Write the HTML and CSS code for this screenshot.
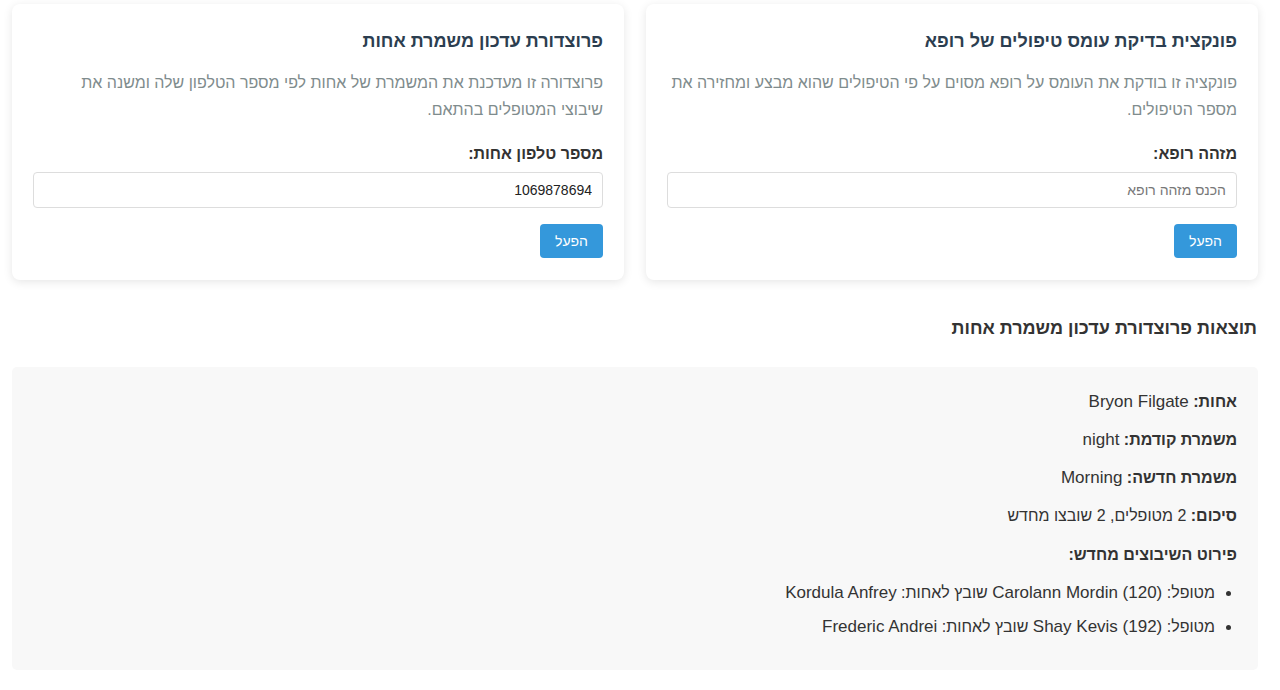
FILE: index.html
```html
<!DOCTYPE html>
<html lang="he" dir="rtl">
<head>
<meta charset="utf-8">
<title>פונקציות ופרוצדורות</title>
<link rel="stylesheet" href="styles.css">
</head>
<body>
<div class="page">
  <div class="cards">
    <section class="card">
      <h3 class="card-title">פונקצית בדיקת עומס טיפולים של רופא</h3>
      <p class="card-desc">פונקציה זו בודקת את העומס על רופא מסוים על פי הטיפולים שהוא מבצע ומחזירה את מספר הטיפולים.</p>
      <label class="field-label" for="doctorId">מזהה רופא:</label>
      <input class="field-input" id="doctorId" type="text" placeholder="הכנס מזהה רופא">
      <button class="btn">הפעל</button>
    </section>
    <section class="card">
      <h3 class="card-title">פרוצדורת עדכון משמרת אחות</h3>
      <p class="card-desc">פרוצדורה זו מעדכנת את המשמרת של אחות לפי מספר הטלפון שלה ומשנה את<br>שיבוצי המטופלים בהתאם.</p>
      <label class="field-label" for="nursePhone">מספר טלפון אחות:</label>
      <input class="field-input" id="nursePhone" type="text" value="1069878694">
      <button class="btn">הפעל</button>
    </section>
  </div>

  <h2 class="results-title">תוצאות פרוצדורת עדכון משמרת אחות</h2>
  <div class="results">
    <p class="row"><strong>אחות:</strong> <span class="en">Bryon Filgate</span></p>
    <p class="row"><strong>משמרת קודמת:</strong> <span class="en">night</span></p>
    <p class="row"><strong>משמרת חדשה:</strong> <span class="en">Morning</span></p>
    <p class="row"><strong>סיכום:</strong> 2 מטופלים, 2 שובצו מחדש</p>
    <p class="row"><strong>פירוט השיבוצים מחדש:</strong></p>
    <ul class="list">
      <li>מטופל: <span class="en">Carolann Mordin (120)</span> שובץ לאחות: <span class="en">Kordula Anfrey</span></li>
      <li>מטופל: <span class="en">Shay Kevis (192)</span> שובץ לאחות: <span class="en">Frederic Andrei</span></li>
    </ul>
  </div>
</div>
</body>
</html>
```
FILE: styles.css
```css
html, body {
  margin: 0;
  padding: 0;
  background: #ffffff;
}

body {
  direction: rtl;
  font-family: "Liberation Sans", Arial, sans-serif;
  color: #333333;
  line-height: 1.7;
  font-size: 16px;
}

.page {
  padding: 4px 22px 0 12px;
}

.cards {
  display: grid;
  grid-template-columns: 1fr 1fr;
  gap: 22px;
}

.card {
  background: #ffffff;
  border-radius: 8px;
  box-shadow: 0 2px 10px rgba(0, 0, 0, 0.1);
  padding: 22px 21px 22px;
}

.card-title {
  margin: 0 0 12px;
  font-size: 18px;
  font-weight: bold;
  color: #2c3e50;
}

.card-desc {
  margin: 0 0 17.5px;
  font-size: 16px;
  color: #7f8c8d;
}

.field-label {
  display: block;
  margin-bottom: 4.5px;
  font-size: 16px;
  font-weight: bold;
  color: #333333;
}

.field-input {
  display: block;
  width: 100%;
  box-sizing: border-box;
  height: 36px;
  padding: 8px 10px;
  border: 1px solid #dddddd;
  border-radius: 4px;
  font-family: inherit;
  font-size: 14px;
  color: #222222;
  background: #ffffff;
}

.field-input::placeholder {
  color: #777777;
}

.btn {
  display: block;
  margin-top: 16px;
  height: 34px;
  padding: 0 15px;
  background: #3498db;
  color: #ffffff;
  border: none;
  border-radius: 4px;
  font-family: inherit;
  font-size: 14px;
  cursor: pointer;
}

.results-title {
  margin: 33px 1px 23px 0;
  font-size: 18px;
  font-weight: bold;
  color: #333333;
}

.results {
  background: #f8f8f8;
  border-radius: 5px;
  padding: 21px 21px 23px;
}

.row {
  margin: 0 0 11px;
}

.en {
  font-size: 17px;
  line-height: 1;
}

.list {
  margin: 0;
  padding: 0 22px 0 0;
}

.list li {
  margin-bottom: 7px;
}
```
